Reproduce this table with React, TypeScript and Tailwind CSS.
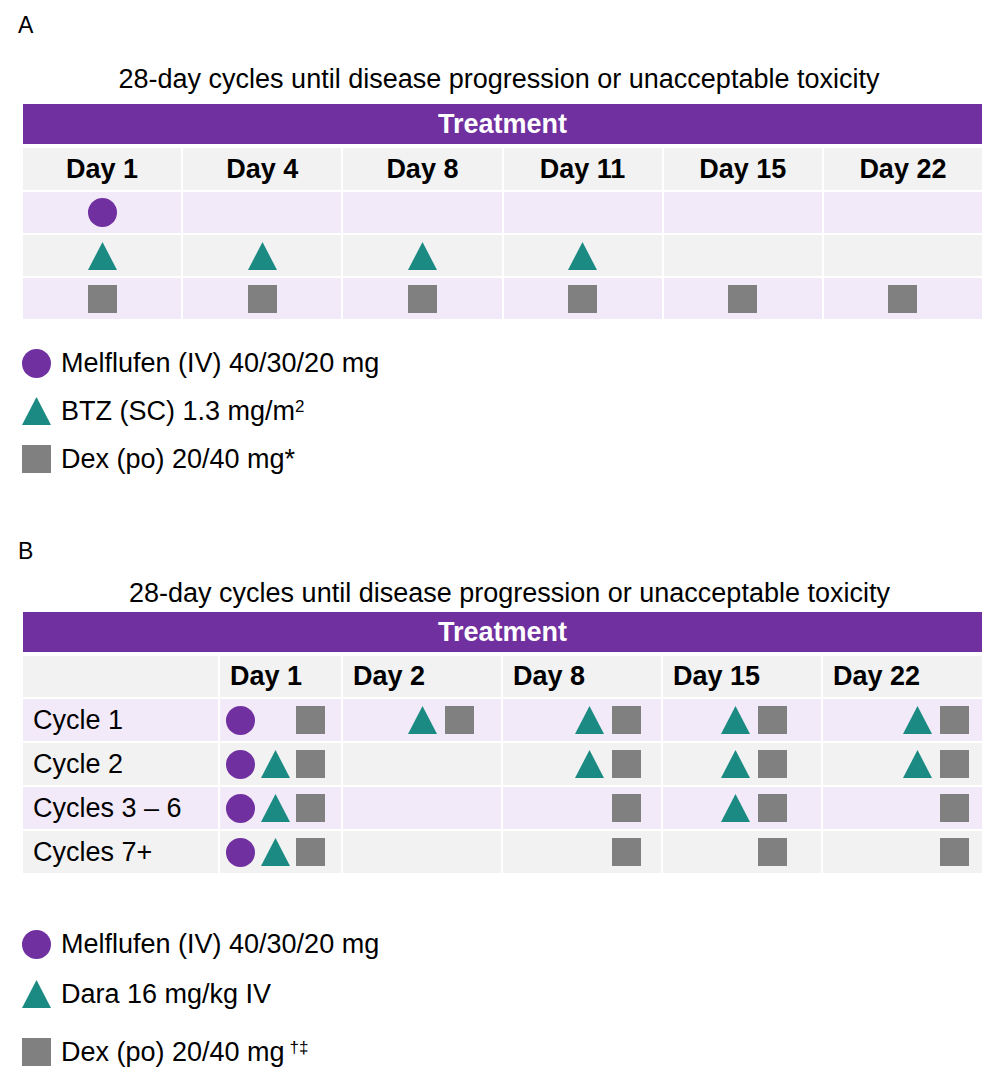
import React from 'react';

type Mark = 'c' | 't' | 's' | 'x';

function Circle() {
  return <span className="block h-[29px] w-[29px] shrink-0 rounded-full bg-[#7030a0]" />;
}

function Tri() {
  return (
    <svg width="29" height="28" viewBox="0 0 29 28" className="block shrink-0">
      <polygon points="14.5,0 29,28 0,28" fill="#1b8a83" />
    </svg>
  );
}

function Sq() {
  return <span className="block h-[28px] w-[29px] shrink-0 bg-[#808080]" />;
}

function Shape({ m }: { m: Mark }) {
  if (m === 'c') return <Circle />;
  if (m === 't') return <Tri />;
  if (m === 's') return <Sq />;
  return <span className="block h-[28px] w-[29px] shrink-0" />;
}

const daysA = ['Day 1', 'Day 4', 'Day 8', 'Day 11', 'Day 15', 'Day 22'];
const rowsA: Mark[][] = [
  ['c', 'x', 'x', 'x', 'x', 'x'],
  ['t', 't', 't', 't', 'x', 'x'],
  ['s', 's', 's', 's', 's', 's'],
];

const daysB = ['Day 1', 'Day 2', 'Day 8', 'Day 15', 'Day 22'];
// right padding of the right-aligned day columns (Day 2 .. Day 22)
const padB = ['pr-[27px]', 'pr-[20px]', 'pr-[34px]', 'pr-[13px]'];
const rowsB: { label: string; day1: Mark[]; rest: Mark[][] }[] = [
  { label: 'Cycle 1', day1: ['c', 'x', 's'], rest: [['t', 's'], ['t', 's'], ['t', 's'], ['t', 's']] },
  { label: 'Cycle 2', day1: ['c', 't', 's'], rest: [[], ['t', 's'], ['t', 's'], ['t', 's']] },
  { label: 'Cycles 3 – 6', day1: ['c', 't', 's'], rest: [[], ['s'], ['t', 's'], ['s']] },
  { label: 'Cycles 7+', day1: ['c', 't', 's'], rest: [[], ['s'], ['s'], ['s']] },
];

function Title() {
  return (
    <div className="text-[27px] leading-[27px] text-black">
      28-day cycles until disease progression or unacceptable toxicity
    </div>
  );
}

function TreatmentBar() {
  return (
    <div className="ml-[23px] flex h-[40px] w-[959px] items-center justify-center bg-[#7030a0] text-[27px] font-bold text-white">
      Treatment
    </div>
  );
}

function LegendRow({ shape, children }: { shape: React.ReactNode; children: React.ReactNode }) {
  return (
    <div className="flex h-[30px] items-center pl-[21px]">
      <div className="flex w-[30px] justify-center">{shape}</div>
      <div className="ml-[10px] text-[27px] leading-[30px] text-black">{children}</div>
    </div>
  );
}

export default function App() {
  return (
    <div className="min-h-[1085px] w-[1000px] bg-white pt-[14px] font-['Liberation_Sans',Arial,sans-serif] text-black">
      {/* Panel A */}
      <div className="pl-[18px] text-[23px] leading-[23px]">A</div>
      <div className="mt-[29px] w-[998px] text-center">
        <Title />
      </div>
      <div className="mt-[11px]">
        <TreatmentBar />
      </div>
      <div className="ml-[23px] mt-[4px] grid w-[959px] grid-cols-6 gap-[2px]">
        {daysA.map((d) => (
          <div key={d} className="flex h-[42px] items-center justify-center bg-[#f2f2f2] text-[27px] font-bold">
            {d}
          </div>
        ))}
        {rowsA.map((row, ri) =>
          row.map((m, ci) => (
            <div
              key={`${ri}-${ci}`}
              className={`flex h-[41px] items-center justify-center ${ri % 2 === 0 ? 'bg-[#f3eaf9]' : 'bg-[#f2f2f2]'}`}
            >
              {m !== 'x' && <Shape m={m} />}
            </div>
          ))
        )}
      </div>

      <div className="mt-[29px] flex flex-col gap-[18px]">
        <LegendRow shape={<Circle />}>Melflufen (IV) 40/30/20 mg</LegendRow>
        <LegendRow shape={<Tri />}>
          BTZ (SC) 1.3 mg/m<sup className="text-[17px]">2</sup>
        </LegendRow>
        <LegendRow shape={<Sq />}>Dex (po) 20/40 mg*</LegendRow>
      </div>

      {/* Panel B */}
      <div className="mt-[66px] pl-[18px] text-[23px] leading-[23px]">B</div>
      <div className="mt-[17px] pl-[19px] text-center">
        <Title />
      </div>
      <div className="mt-[5px]">
        <TreatmentBar />
      </div>
      <div className="ml-[23px] mt-[4px] grid w-[959px] grid-cols-[195px_121px_158px_158px_158px_159px] gap-[2px]">
        <div className="h-[41px] bg-[#f2f2f2]" />
        {daysB.map((d) => (
          <div key={d} className="flex h-[41px] items-center bg-[#f2f2f2] pl-[10px] text-[27px] font-bold">
            {d}
          </div>
        ))}
        {rowsB.map((row, ri) => {
          const bg = ri % 2 === 0 ? 'bg-[#f3eaf9]' : 'bg-[#f2f2f2]';
          return (
            <React.Fragment key={row.label}>
              <div className={`flex h-[42px] items-center pl-[10px] text-[27px] ${bg}`}>{row.label}</div>
              <div className={`flex h-[42px] items-center gap-[6px] pl-[6px] ${bg}`}>
                {row.day1.map((m, i) => (
                  <Shape key={i} m={m} />
                ))}
              </div>
              {row.rest.map((cell, ci) => (
                <div key={ci} className={`flex h-[42px] items-center justify-end gap-[8px] ${padB[ci]} ${bg}`}>
                  {cell.map((m, i) => (
                    <Shape key={i} m={m} />
                  ))}
                </div>
              ))}
            </React.Fragment>
          );
        })}
      </div>

      <div className="mt-[56px] flex flex-col">
        <LegendRow shape={<Circle />}>Melflufen (IV) 40/30/20 mg</LegendRow>
        <div className="mt-[20px]">
          <LegendRow shape={<Tri />}>Dara 16 mg/kg IV</LegendRow>
        </div>
        <div className="mt-[28px]">
          <LegendRow shape={<Sq />}>
            Dex (po) 20/40 mg<sup className="ml-[5px] text-[17px]">†‡</sup>
          </LegendRow>
        </div>
      </div>
    </div>
  );
}
